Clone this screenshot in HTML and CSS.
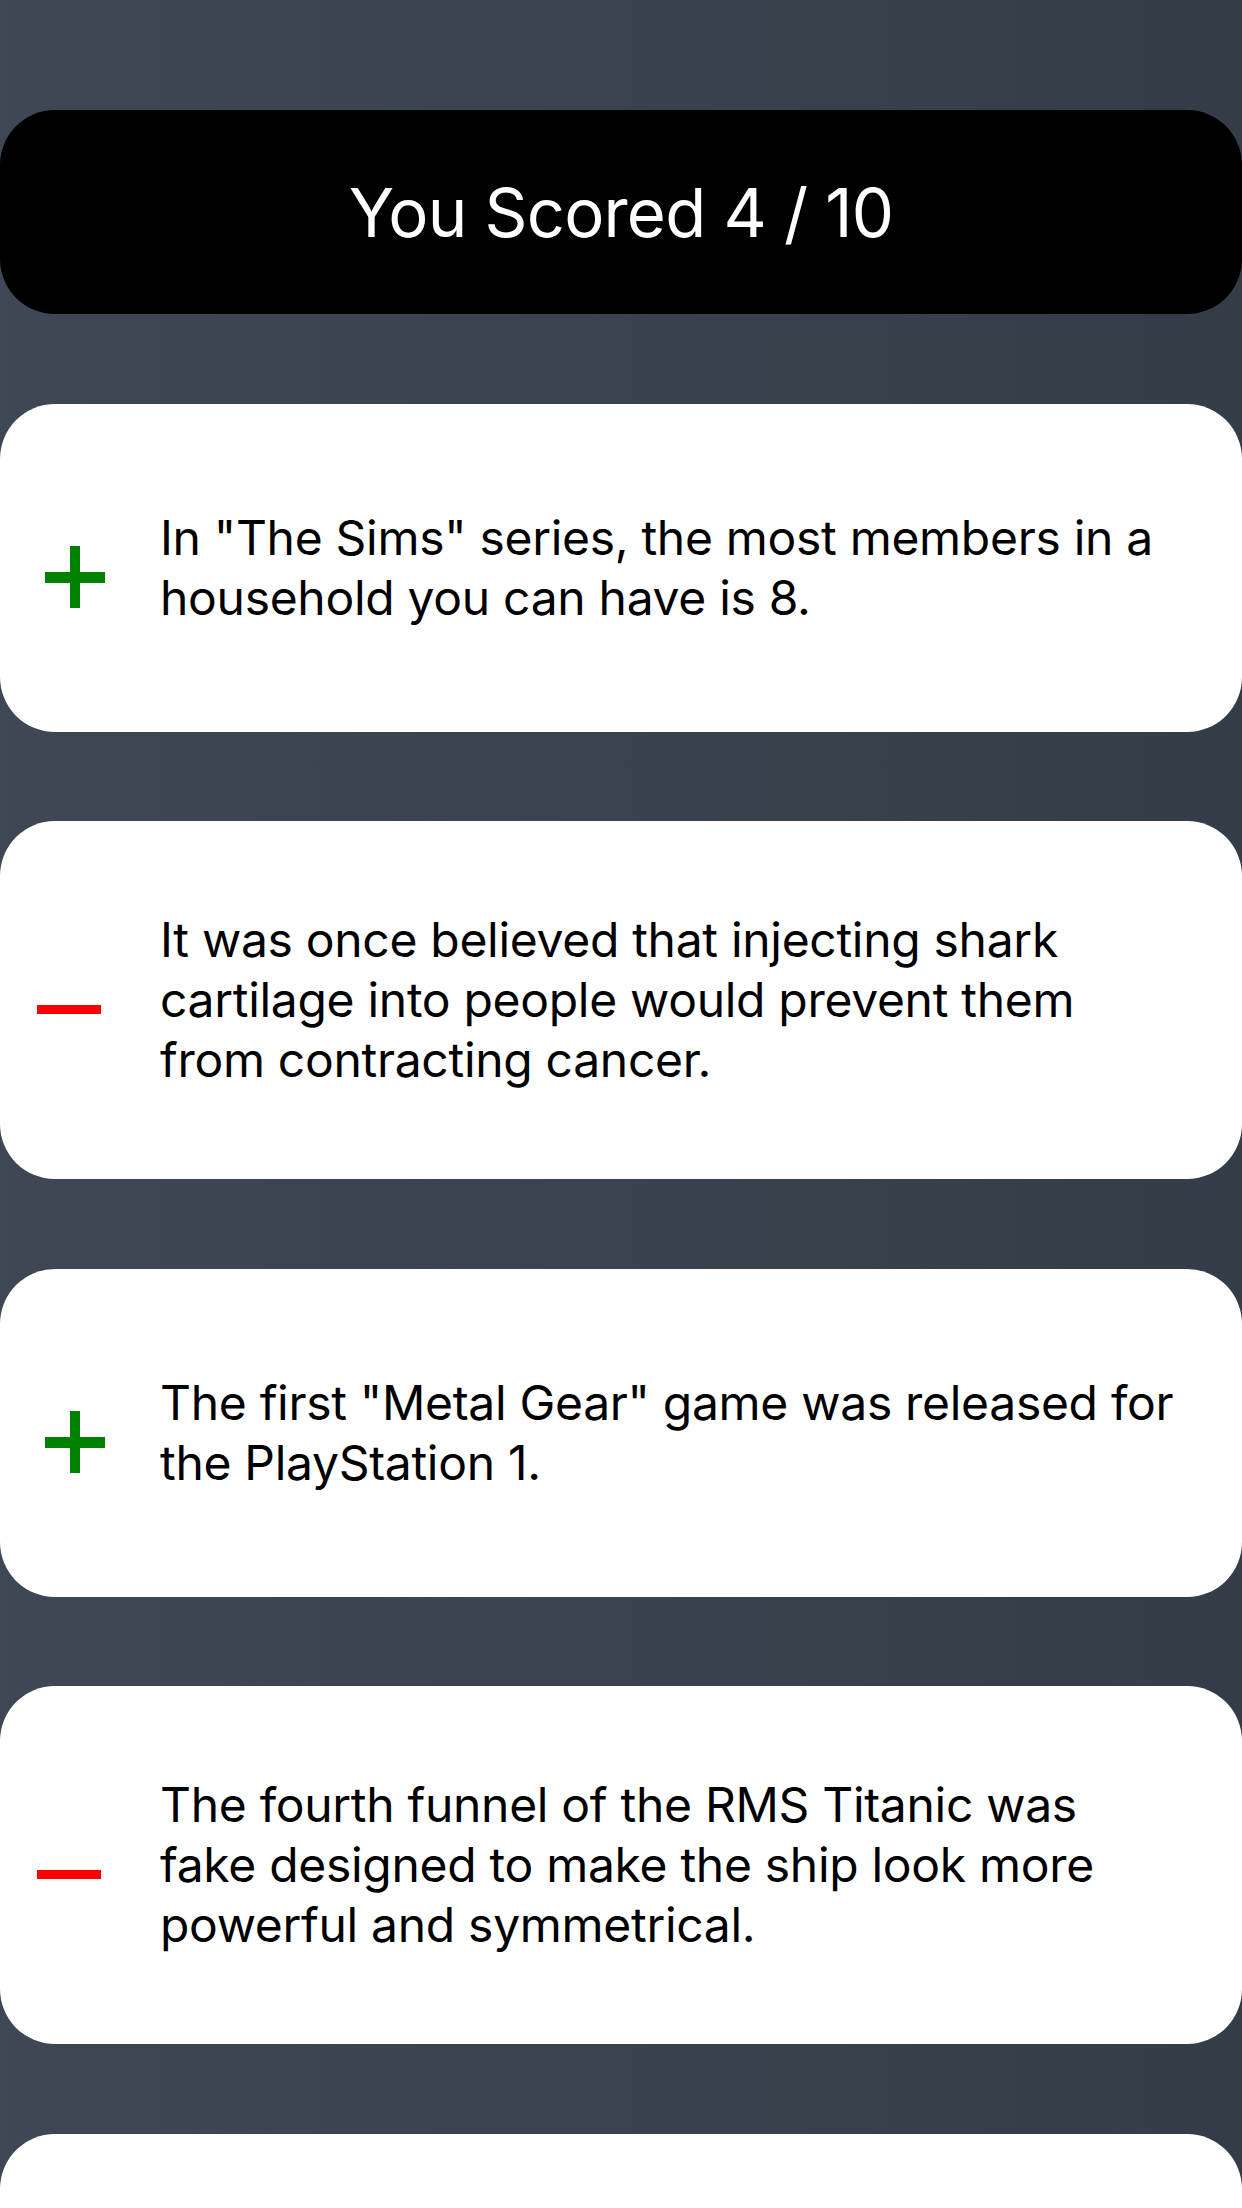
FILE: index.html
```html
<!DOCTYPE html>
<html lang="en">
<head>
<meta charset="utf-8">
<title>Quiz Results</title>
<link rel="stylesheet" href="styles.css">
</head>
<body>
<main class="results">
  <header class="score">You Scored 4 / 10</header>

  <div class="card">
    <span class="mark plus"><svg viewBox="0 0 68 62" width="68" height="62"><rect x="8" y="26" width="60" height="11" fill="#008000"/><rect x="33" y="0" width="10" height="62" fill="#008000"/></svg></span>
    <p class="statement">In "The Sims" series, the most members in a household you can have is 8.</p>
  </div>

  <div class="card">
    <span class="mark minus"><svg viewBox="0 0 68 62" width="68" height="62"><rect x="0" y="27" width="64" height="9" fill="#ff0000"/></svg></span>
    <p class="statement">It was once believed that injecting shark cartilage into people would prevent them from contracting cancer.</p>
  </div>

  <div class="card">
    <span class="mark plus"><svg viewBox="0 0 68 62" width="68" height="62"><rect x="8" y="26" width="60" height="11" fill="#008000"/><rect x="33" y="0" width="10" height="62" fill="#008000"/></svg></span>
    <p class="statement">The first "Metal Gear" game was released for the PlayStation 1.</p>
  </div>

  <div class="card">
    <span class="mark minus"><svg viewBox="0 0 68 62" width="68" height="62"><rect x="0" y="27" width="64" height="9" fill="#ff0000"/></svg></span>
    <p class="statement">The fourth funnel of the RMS Titanic was fake designed to make the ship look more powerful and symmetrical.</p>
  </div>

  <div class="card"></div>
</main>
</body>
</html>
```

FILE: styles.css
```css
html {
  background: linear-gradient(to right, #3e4855 0%, #343c47 100%);
  min-height: 100%;
}

body {
  margin: 0;
  font-family: Inter, "Noto Sans", "Liberation Sans", sans-serif;
  -webkit-font-smoothing: antialiased;
}

.results {
  display: flex;
  flex-direction: column;
  gap: 89.5px;
  padding-top: 110px;
  padding-bottom: 90px;
}

.score {
  height: 204px;
  background: #000;
  color: #fff;
  border-radius: 55px;
  display: flex;
  align-items: center;
  justify-content: center;
  font-size: 67px;
  font-weight: 400;
  letter-spacing: -0.8px;
}

.card {
  background: #fff;
  border-radius: 55px;
  min-height: 328px;
  box-sizing: border-box;
  padding: 89px 40px 89px 37px;
  display: flex;
  align-items: center;
  gap: 55px;
}

.mark {
  flex: 0 0 68px;
  height: 62px;
  margin-top: 18px;
  display: block;
}

.mark svg {
  display: block;
}

.statement {
  margin: 0;
  max-width: 1020px;
  font-size: 48px;
  line-height: 60px;
  color: #000;
  letter-spacing: -0.3px;
}
```
